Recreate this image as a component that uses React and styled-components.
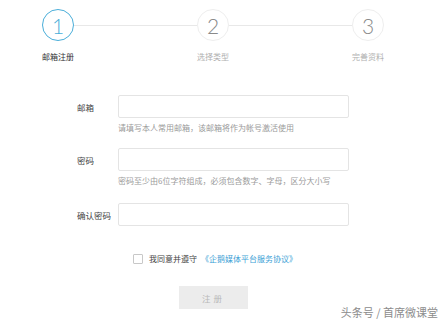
import React from "react";
import styled, { createGlobalStyle } from "styled-components";

const Global = createGlobalStyle`
  html, body { margin: 0; padding: 0; background: #fff; }
  body { font-family: "Noto Sans CJK SC", "Noto Sans", sans-serif; }
`;

const Page = styled.div`
  position: relative;
  width: 445px;
  height: 328px;
  overflow: hidden;
  background: #fff;
`;

const Stepper = styled.div`
  display: flex;
  align-items: flex-start;
  padding: 9px 0 0 42px;
`;

const Step = styled.div`
  display: flex;
  flex-direction: column;
  align-items: center;
  width: 32px;
`;

const Circle = styled.div`
  box-sizing: border-box;
  width: 32px;
  height: 32px;
  border-radius: 50%;
  border: 1px solid ${p => (p.active ? "#4aaed9" : "#eeeeee")};
  color: ${p => (p.active ? "#4aaed9" : "#8a8a8a")};
  display: flex;
  align-items: center;
  justify-content: center;
  font-family: Lato, "Open Sans", sans-serif;
  font-weight: 300;
  font-size: 21px;
`;

const StepLabel = styled.div`
  margin-top: 11px;
  white-space: nowrap;
  font-size: 8px;
  line-height: 10px;
  color: ${p => (p.active ? "#333" : "#b0b0b0")};
`;

const Line = styled.div`
  width: 123px;
  height: 1px;
  margin-top: 16px;
  background: #e8e8e8;
`;

const Form = styled.div`
  display: flex;
  flex-direction: column;
  padding: 33px 0 0 77px;
`;

const Field = styled.div`
  display: grid;
  grid-template-columns: 41px 231px;
  align-items: center;
  margin-bottom: ${p => p.gap}px;
`;

const Label = styled.label`
  font-size: 8.5px;
  color: #444;
  white-space: nowrap;
`;

const Input = styled.div`
  box-sizing: border-box;
  height: 23px;
  border: 1px solid #e4e4e4;
  border-radius: 2px;
  background: #fff;
`;

const Hint = styled.div`
  grid-column: 2;
  margin-top: 5px;
  font-size: 8px;
  line-height: 10px;
  color: #9a9a9a;
  white-space: nowrap;
`;

const Agree = styled.div`
  display: flex;
  align-items: center;
  margin-left: 56px;
  font-size: 8px;
  color: #444;
`;

const Box = styled.span`
  box-sizing: border-box;
  width: 10px;
  height: 10px;
  border: 1px solid #c8c8c8;
  border-radius: 1px;
  margin-right: 6px;
`;

const Link = styled.a`
  color: #3d9fd6;
  margin-left: 4px;
  text-decoration: none;
`;

const Button = styled.div`
  width: 69px;
  height: 23px;
  margin: 22px 0 0 102px;
  background: #ececec;
  color: #b8b8b8;
  font-size: 8.5px;
  letter-spacing: 3px;
  display: flex;
  align-items: center;
  justify-content: center;
`;

const Mark = styled.div`
  position: absolute;
  right: 7px;
  bottom: 8px;
  font-size: 11px;
  color: #8c8c8c;
  text-shadow: 0 0 2px #fff;
`;

const steps = ["邮箱注册", "选择类型", "完善资料"];

export default function App() {
  return (
    <Page>
      <Global />
      <Stepper>
        {steps.map((s, i) => (
          <React.Fragment key={s}>
            {i > 0 && <Line />}
            <Step>
              <Circle active={i === 0}>{i + 1}</Circle>
              <StepLabel active={i === 0}>{s}</StepLabel>
            </Step>
          </React.Fragment>
        ))}
      </Stepper>
      <Form>
        <Field gap={15}>
          <Label>邮箱</Label>
          <Input />
          <Hint>请填写本人常用邮箱，该邮箱将作为帐号激活使用</Hint>
        </Field>
        <Field gap={17}>
          <Label>密码</Label>
          <Input />
          <Hint>密码至少由6位字符组成，必须包含数字、字母，区分大小写</Hint>
        </Field>
        <Field gap={27}>
          <Label>确认密码</Label>
          <Input />
        </Field>
        <Agree>
          <Box />
          我同意并遵守
          <Link>《企鹅媒体平台服务协议》</Link>
        </Agree>
        <Button>注册</Button>
      </Form>
      <Mark>头条号 / 首席微课堂</Mark>
    </Page>
  );
}
